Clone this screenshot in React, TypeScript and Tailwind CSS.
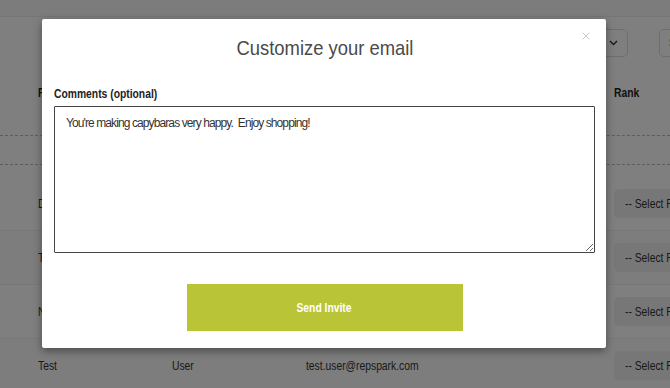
import { X } from 'lucide-react';

const font = { fontFamily: '"Liberation Sans", Arial, sans-serif' };

const rows = [
  { first: 'Demo', last: 'Account', email: 'demo.account@repspark.com' },
  { first: 'Tina', last: 'Reed', email: 'tina.reed@repspark.com' },
  { first: 'Nick', last: 'Lane', email: 'nick.lane@repspark.com' },
  { first: 'Test', last: 'User', email: 'test.user@repspark.com' },
];

// texto estrecho, como en la captura
function N({ children, center = false }: { children: React.ReactNode; center?: boolean }) {
  return (
    <span className={`inline-block whitespace-nowrap scale-x-[0.86] ${center ? 'origin-center' : 'origin-left'}`}>
      {children}
    </span>
  );
}

function RankSelect() {
  return (
    <div className="w-[120px] h-[29px] shrink-0 rounded-[5px] bg-[#efefef] flex items-center pl-[11px] text-[12px] text-[#333]">
      <N>-- Select Rank</N>
    </div>
  );
}

export default function App() {
  return (
    <div className="relative w-[670px] h-[388px] overflow-hidden bg-white" style={font}>
      {/* Página de fondo */}
      <div className="h-[17px] bg-[#f8f8f8] border-b border-[#ececec]" />
      <div className="flex gap-[31px] pl-[508px] pt-[12px] h-[53px]">
        <div className="w-[120px] h-[28px] shrink-0 rounded-[5px] border border-[#ddd] flex items-center justify-end pr-[9px]">
          <svg width="9" height="6" viewBox="0 0 9 6" fill="none" stroke="#333" strokeWidth="1.4">
            <path d="M1 1l3.5 3.5L8 1" />
          </svg>
        </div>
        <div className="w-[120px] h-[28px] shrink-0 rounded-[5px] border border-[#ddd] flex items-center pl-[9px] text-[12px] text-[#333]">
          <N>Search</N>
        </div>
      </div>
      <div className="grid grid-cols-[134px_134px_308px_1fr] pl-[38px] h-[45px] items-center text-[12px] font-bold text-[#222]">
        <N>First Name</N>
        <N>Last Name</N>
        <N>Email</N>
        <N>Rank</N>
      </div>
      <div className="mt-[20px] h-[30px] border-y border-dashed border-[#bbb]" />
      <div className="mt-[12px]">
        {rows.map((r, i) => (
          <div
            key={r.email}
            className={`grid grid-cols-[134px_134px_308px_1fr] pl-[38px] h-[54px] items-center text-[12px] text-[#333] border-b border-[#f0f0f0] ${i % 2 === 0 ? 'bg-white' : 'bg-[#fafafa]'}`}
          >
            <N>{r.first}</N>
            <N>{r.last}</N>
            <N>{r.email}</N>
            <RankSelect />
          </div>
        ))}
      </div>

      {/* Capa oscura */}
      <div className="absolute inset-0 bg-black/50" />

      {/* Modal */}
      <div className="absolute left-[42px] top-[19px] w-[564px] h-[329px] bg-white rounded-[2px] shadow-[0_3px_9px_rgba(0,0,0,0.4)] pl-[12px] pr-[11px] flex flex-col">
        <X className="absolute right-[14px] top-[11px] w-[12px] h-[12px] text-[#aaa]" strokeWidth={1.3} />
        <h2 className="mt-[17px] text-center text-[21px] font-light text-[#4a4a4a] leading-[24px]">
          <span className="inline-block whitespace-nowrap scale-x-[0.876]">Customize your email</span>
        </h2>
        <label className="mt-[27px] text-[12px] font-bold text-[#222] leading-[14px]">
          <N>Comments (optional)</N>
        </label>
        <textarea
          className="mt-[5px] w-full h-[147px] border border-[#444] rounded-[1px] px-[11px] pt-[8px] pb-[10px] text-[12px] text-[#333] leading-[16px] tracking-[-0.9px] outline-none resize-y"
          style={font}
          defaultValue="You're making capybaras very happy.  Enjoy shopping!"
        />
        <div className="flex justify-center mt-[31px]">
          <button className="w-[276px] h-[47px] bg-[#b9c437] text-white text-[12px] font-bold">
            <N center>Send Invite</N>
          </button>
        </div>
      </div>
    </div>
  );
}
